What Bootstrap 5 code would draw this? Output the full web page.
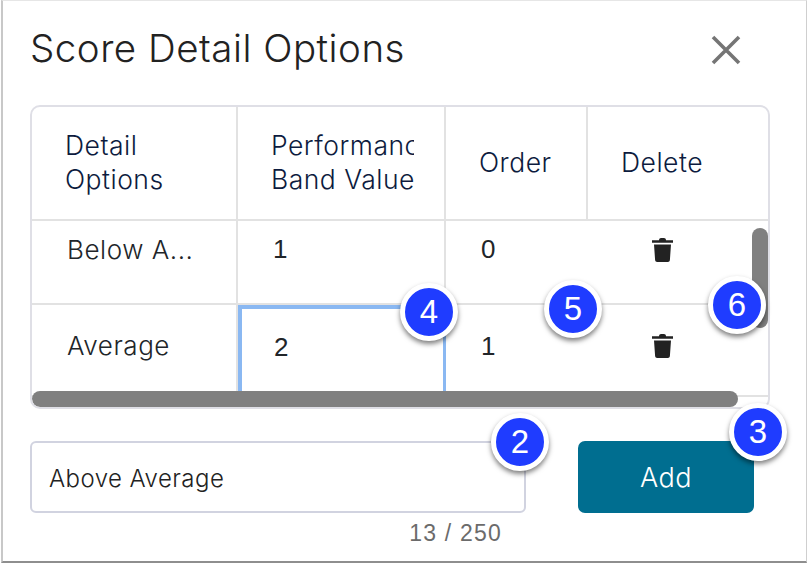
<!DOCTYPE html>
<html lang="en">
<head>
<meta charset="utf-8">
<title>Score Detail Options</title>
<link href="https://cdn.jsdelivr.net/npm/bootstrap@5.3.0/dist/css/bootstrap.min.css" rel="stylesheet">
<style>
html,body{margin:0;background:#fff;width:808px;height:564px;overflow:hidden}
body{font-family:Inter,"Liberation Sans",sans-serif;color:#222}
.shot{position:relative;width:808px;height:564px}
.panel{width:806px;height:563px;margin-left:1px;border:1px solid #cfcfcf;border-top-color:#e6e6e6;border-bottom:2px solid #8e8e8e;border-left:2px solid #c8c8c8;padding:0 36px 0 27px;background:#fff}
.head-row{height:104px;padding-top:23px}
.title-text{font-size:38.5px;font-weight:300;line-height:48px;letter-spacing:.5px;color:#222;margin:0;white-space:nowrap}
.close-x{width:30px;height:30px;padding:0;border:0;background:none;margin-right:29px;margin-top:11px;line-height:0}
.grid-wrap{position:relative;height:304px;border:2px solid #dfdfe6;border-radius:10px;overflow:hidden}
.score-grid{table-layout:fixed;width:738px;border-collapse:collapse;margin:0}
.score-grid th,.score-grid td{border:0;border-right:2px solid #e2e2e2;border-bottom:2px solid #e2e2e2;padding:0}
.score-grid th:last-child,.score-grid td:last-child,.score-grid td.no-edge{border-right:0}
.score-grid th{height:113px;vertical-align:middle;padding-bottom:2px;font-weight:300;font-size:26.5px;line-height:34px;color:#0d1b3e;letter-spacing:.5px}
.th-in{margin-left:33px;margin-right:30px;overflow:hidden;white-space:nowrap}
.row-a td{height:84px;vertical-align:top;padding-top:12px}
.row-b td{height:92px;vertical-align:top;padding-top:24px}
.name-cell{font-size:26px;font-weight:300;line-height:34px;padding-left:35px!important;letter-spacing:.55px}
.num-cell{font-family:"Liberation Sans",sans-serif;font-size:26px;line-height:34px;padding-left:35px!important}
.row-a .num-cell{padding-top:11px}
.score-grid .row-b .focus-cell{border-right-color:#8ab8f2;box-shadow:inset 4px 4px 0 #8ab8f2,inset -1px 0 0 #8ab8f2;padding-left:36px!important;padding-top:25px}
.bin-cell{padding-right:32px!important}
.row-a .bin-cell{padding-top:17px}
.row-b .bin-cell{padding-top:29px}
.scroll-h{position:absolute;left:0;bottom:0;width:706px;height:16px;border-radius:8px;background:#808080}
.scroll-v{position:absolute;right:0;top:121px;width:16px;height:100px;border-radius:8px;background:#808080}
.add-row{margin-top:32px}
.text-box{width:496px;height:72px;border:2px solid #d1d3e0;border-radius:6px;padding:2px 17px 0;font-size:24px;font-weight:300;letter-spacing:.45px;color:#222}
.add-btn{width:176px;height:72px;margin-left:52px;padding-top:8px;background:#006e90;border:0;border-radius:7px;color:#fff;font-size:27px;font-weight:300;letter-spacing:.4px}
.add-btn:hover{background:#006e90;color:#fff}
.count-text{width:472px;margin-top:7px;text-align:right;font-family:"Liberation Sans",sans-serif;font-size:23px;line-height:26px;letter-spacing:1.2px;color:#6b6b6b}
.pin{position:absolute;width:58px;height:58px;border:5px solid #fff;border-radius:50%;background:#1f3cff;color:#fff;font-family:"Liberation Sans",sans-serif;font-size:33px;box-shadow:0 3px 5px rgba(0,0,0,.5)}
.p2{left:491px;top:413px}.p3{left:729px;top:403px}.p4{left:400px;top:283px}.p5{left:544px;top:280px}.p6{left:708px;top:276px}
.bin{width:21px;height:24px;display:block}
</style>
</head>
<body>
<div class="shot">
  <div class="panel">
    <div class="head-row d-flex justify-content-between align-items-start">
      <h1 class="title-text">Score Detail Options</h1>
      <button class="close-x" type="button" aria-label="Close">
        <svg width="30" height="30" viewBox="0 0 30 30"><path d="M2 2 28 28M28 2 2 28" stroke="#757575" stroke-width="3.6" fill="none"/></svg>
      </button>
    </div>
    <div class="grid-wrap">
      <table class="table score-grid">
        <colgroup><col style="width:205px"><col style="width:208px"><col style="width:142px"><col></colgroup>
        <thead>
          <tr>
            <th><div class="th-in">Detail<br>Options</div></th>
            <th><div class="th-in">Performance<br>Band Value</div></th>
            <th><div class="th-in">Order</div></th>
            <th><div class="th-in">Delete</div></th>
          </tr>
        </thead>
        <tbody>
          <tr class="row-a">
            <td class="name-cell">Below A...</td>
            <td class="num-cell">1</td>
            <td class="num-cell no-edge">0</td>
            <td class="bin-cell"><div class="d-flex justify-content-center"><svg class="bin" viewBox="0 0 21 24"><path fill="#222" d="M7 2.200C7 .8 8 0 9 0h3c1 0 2 .8 2 2.200h7v2.600H0V2.200zM2 6.500h17L17.900 22c-.1 1.300-1 2-2 2H5.100c-1 0-1.900-.7-2-2z"/></svg></div></td>
          </tr>
          <tr class="row-b">
            <td class="name-cell">Average</td>
            <td class="num-cell focus-cell">2</td>
            <td class="num-cell no-edge">1</td>
            <td class="bin-cell"><div class="d-flex justify-content-center"><svg class="bin" viewBox="0 0 21 24"><path fill="#222" d="M7 2.200C7 .8 8 0 9 0h3c1 0 2 .8 2 2.200h7v2.600H0V2.200zM2 6.500h17L17.900 22c-.1 1.300-1 2-2 2H5.100c-1 0-1.900-.7-2-2z"/></svg></div></td>
          </tr>
        </tbody>
      </table>
      <div class="scroll-v"></div>
      <div class="scroll-h"></div>
    </div>
    <div class="add-row d-flex">
      <input class="text-box" type="text" value="Above Average" aria-label="Detail option">
      <button class="btn add-btn" type="button">Add</button>
    </div>
    <div class="count-text">13 / 250</div>
  </div>
  <div class="pin p2 d-flex align-items-center justify-content-center">2</div>
  <div class="pin p3 d-flex align-items-center justify-content-center">3</div>
  <div class="pin p4 d-flex align-items-center justify-content-center">4</div>
  <div class="pin p5 d-flex align-items-center justify-content-center">5</div>
  <div class="pin p6 d-flex align-items-center justify-content-center">6</div>
</div>
<script src="https://cdn.jsdelivr.net/npm/bootstrap@5.3.0/dist/js/bootstrap.bundle.min.js"></script>
</body>
</html>
